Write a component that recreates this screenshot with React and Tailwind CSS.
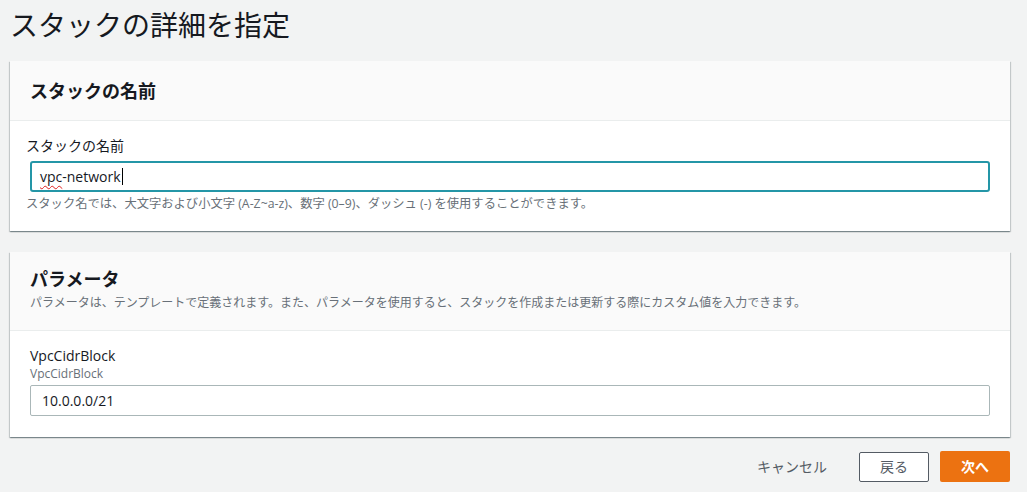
import React from "react";

const font = { fontFamily: '"Open Sans", "Noto Sans CJK JP", sans-serif' };

function Card({ children, className = "" }) {
  return (
    <div
      className={
        "bg-white shadow-[0_1px_1px_0_rgba(0,28,36,0.3),1px_1px_1px_0_rgba(0,28,36,0.15),-1px_1px_1px_0_rgba(0,28,36,0.15)] " +
        className
      }
    >
      {children}
    </div>
  );
}

export default function App() {
  return (
    <div
      className="w-[1027px] h-[492px] overflow-hidden bg-[#f2f3f3] pl-[10px] pr-[17px] text-[#16191f]"
      style={font}
    >
      <div className="h-[61px] pt-[4px] text-[28px] leading-[42px] font-normal text-[#16191f]">
        スタックの詳細を指定
      </div>

      <Card className="mb-[21px]">
        <div className="h-[60px] flex items-center px-[20px] bg-[#fafafa] border-b border-[#eaeded]">
          <h2 className="text-[18px] leading-[24px] font-bold">スタックの名前</h2>
        </div>
        <div className="px-[20px] pt-[15px] pb-[19px]">
          <div className="text-[14px] leading-[20px] text-[#16191f] -ml-[4px]">スタックの名前</div>
          <div className="mt-[5px] h-[31px] border-2 border-[#2496a7] rounded-[3px] bg-white flex items-center pl-[8px] text-[14px]">
            <span className="underline decoration-wavy decoration-[#e02020] underline-offset-[3px] decoration-1">vpc</span>
            <span>-network</span>
            <span className="inline-block w-px h-[17px] bg-black ml-px" />
          </div>
          <div className="mt-[4px] text-[12.3px] leading-[16px] text-[#687078] -ml-[4px]">
            スタック名では、大文字および小文字 (A-Z~a-z)、数字 (0–9)、ダッシュ (-) を使用することができます。
          </div>
        </div>
      </Card>

      <Card>
        <div className="px-[20px] pt-[15px] pb-[19px] bg-[#fafafa] border-b border-[#eaeded]">
          <h2 className="text-[18px] leading-[24px] font-bold">パラメータ</h2>
          <p className="mt-[4px] text-[12px] leading-[16px] text-[#687078]">
            パラメータは、テンプレートで定義されます。また、パラメータを使用すると、スタックを作成または更新する際にカスタム値を入力できます。
          </p>
        </div>
        <div className="px-[20px] pt-[15px] pb-[21px]">
          <div className="text-[14px] leading-[20px] text-[#16191f]">VpcCidrBlock</div>
          <div className="text-[12px] leading-[16px] text-[#687078]">VpcCidrBlock</div>
          <div className="mt-[3px] h-[31px] border border-[#aab7b8] rounded-[2px] bg-white flex items-center pl-[11px] text-[14px] text-[#16191f]">
            10.0.0.0/21
          </div>
        </div>
      </Card>

      <div className="mt-[14px] flex justify-end items-center">
        <button className="h-[30px] px-[20px] text-[14px] text-[#545b64] mr-[12px]">キャンセル</button>
        <button className="h-[30px] w-[70px] border border-[#545b64] rounded-[2px] bg-white text-[14px] text-[#545b64] mr-[11px]">
          戻る
        </button>
        <button className="h-[31px] w-[70px] rounded-[2px] bg-[#ec7211] text-[14px] font-bold text-white">
          次へ
        </button>
      </div>
    </div>
  );
}
